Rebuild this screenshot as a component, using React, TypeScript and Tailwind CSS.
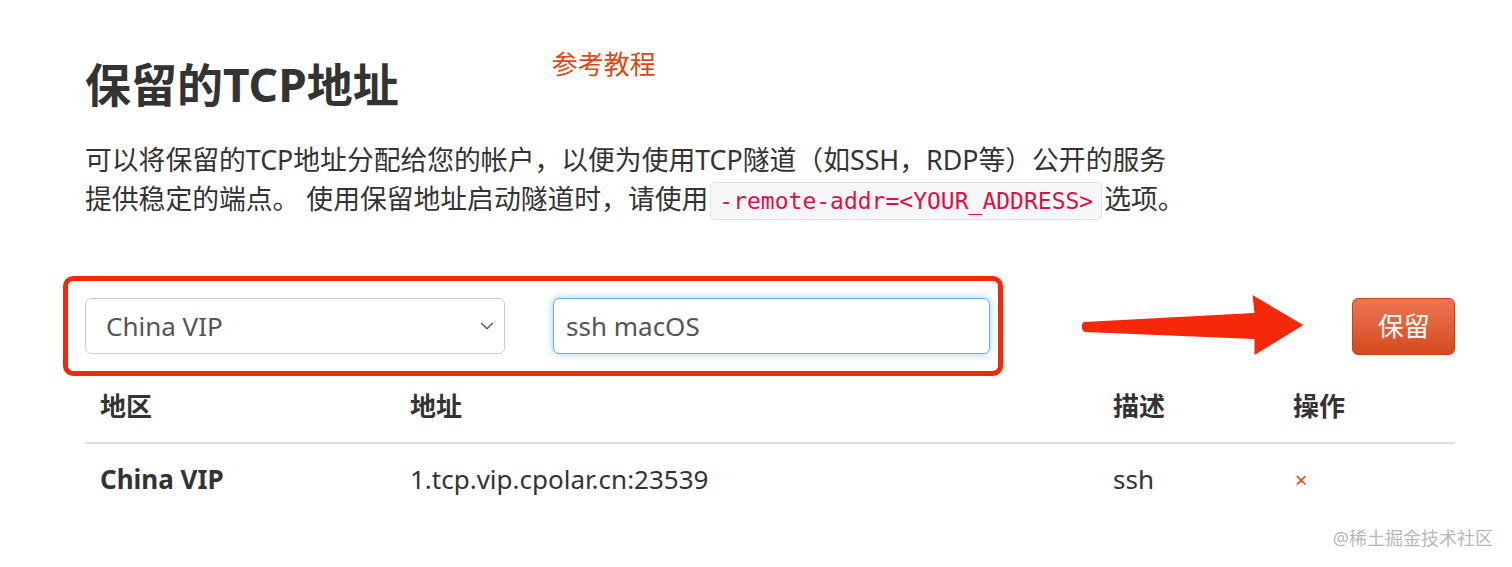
import { ChevronDown } from "lucide-react";

const sans = "font-['Noto_Sans','Noto_Sans_CJK_SC',sans-serif]";

export default function App() {
  return (
    <div className={`relative min-h-[567px] bg-white text-[#333] ${sans}`}>
      <div className="pl-[85px] pr-[57px]">
        {/* heading row */}
        <div className="flex items-start pt-[48px]">
          <h1 className="mt-[11px] text-[46px] leading-[50px] font-bold">
            保留的TCP地址
          </h1>
          <a className="ml-[153px] text-[26px] leading-[32px] text-[#dd4814]">参考教程</a>
        </div>

        <p className="mt-[31px] text-[26.8px] leading-[39px]">
          可以将保留的TCP地址分配给您的帐户，以便为使用TCP隧道（如SSH，RDP等）公开的服务
          <br />
          提供稳定的端点。 使用保留地址启动隧道时，请使用
          <code className="mx-[2px] rounded-[5px] border border-[#e1e1e8] bg-[#f7f7f9] px-[8px] py-[5px] font-['DejaVu_Sans_Mono',monospace] text-[23px] text-[#dd1144]">
            -remote-addr=&lt;YOUR_ADDRESS&gt;
          </code>
          选项。
        </p>

        {/* form row */}
        <div className="mt-[55px] -ml-[22px] flex items-center">
          <div className="flex h-[100px] w-[940px] items-center rounded-[10px] border-[5px] border-[#f5290a] pl-[17px] pr-[8px]">
            <div className="flex h-[56px] w-[420px] items-center justify-between rounded-[6px] border border-[#cccccc] bg-white pl-[20px] pr-[6px]">
              <span className="text-[26px] text-[#555]">China VIP</span>
              <ChevronDown className="h-[22px] w-[22px] text-[#555]" strokeWidth={1.4} />
            </div>
            <div className="ml-[48px] flex h-[56px] w-[437px] items-center rounded-[6px] border border-[#66afe9] bg-white pl-[12px] shadow-[0_0_8px_rgba(102,175,233,0.6)]">
              <span className="text-[26px] text-[#555]">ssh macOS</span>
            </div>
          </div>

          <svg className="ml-[77px]" width="226" height="62" viewBox="0 0 226 62">
            <path
              d="M4 27 C1 28 1 36 5 37 L175 44 L175 60 L224 30 L173 0 L175 18 Z"
              fill="#f7270a"
            />
          </svg>

          <button className="ml-[47px] h-[57px] w-[103px] rounded-[6px] border border-[#c8431b] bg-gradient-to-b from-[#ea7550] to-[#d5491d] text-[26px] text-white">
            保留
          </button>
        </div>

        {/* table */}
        <div className="text-[26px] leading-[36px]">
          <div className="grid grid-cols-[310px_703px_180px_1fr] border-b-2 border-[#dddddd] font-bold">
            <div className="pl-[15px] pt-[12px] pb-[18px]">地区</div>
            <div className="pl-[15px] pt-[12px] pb-[18px]">地址</div>
            <div className="pl-[15px] pt-[12px] pb-[18px]">描述</div>
            <div className="pl-[15px] pt-[12px] pb-[18px]">操作</div>
          </div>
          <div className="grid grid-cols-[310px_703px_180px_1fr]">
            <div className="pl-[15px] pt-[17px] font-bold">China VIP</div>
            <div className="pl-[15px] pt-[17px]">1.tcp.vip.cpolar.cn:23539</div>
            <div className="pl-[15px] pt-[17px]">ssh</div>
            <div className="pl-[17px] pt-[17px] text-[22px] text-[#dd4814]">×</div>
          </div>
        </div>
      </div>

      <div className="absolute right-[19px] bottom-[15px] text-[18px] text-[#b8b8b8]">
        @稀土掘金技术社区
      </div>
    </div>
  );
}
